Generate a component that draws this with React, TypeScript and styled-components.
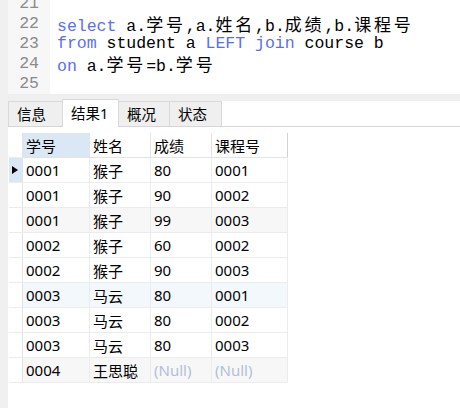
import React from 'react';
import styled, { createGlobalStyle } from 'styled-components';

const GlobalStyle = createGlobalStyle`
  html, body {
    margin: 0;
    padding: 0;
    background: #ffffff;
  }
`;

const CJK_RE = /([\u3400-\u9fff]+)/;

type Token = { text: string; kw?: boolean };

const codeLines: { no: number; tokens: Token[] }[] = [
  { no: 21, tokens: [] },
  { no: 22, tokens: [{ text: 'select', kw: true }, { text: ' a.学号,a.姓名,b.成绩,b.课程号' }] },
  {
    no: 23,
    tokens: [
      { text: 'from', kw: true },
      { text: ' student a ' },
      { text: 'LEFT', kw: true },
      { text: ' ' },
      { text: 'join', kw: true },
      { text: ' course b' },
    ],
  },
  { no: 24, tokens: [{ text: 'on', kw: true }, { text: ' a.学号=b.学号' }] },
  { no: 25, tokens: [] },
];

const tabs = [
  { label: '信息', width: 55 },
  { label: '结果1', width: 57, active: true },
  { label: '概况', width: 52 },
  { label: '状态', width: 53 },
];

const columns = [
  { title: '学号', width: 67, selected: true },
  { title: '姓名', width: 61 },
  { title: '成绩', width: 61 },
  { title: '课程号', width: 76 },
];

type Row = { cells: (string | null)[]; tone?: 'gray' | 'blue'; current?: boolean };

const rows: Row[] = [
  { cells: ['0001', '猴子', '80', '0001'], current: true },
  { cells: ['0001', '猴子', '90', '0002'] },
  { cells: ['0001', '猴子', '99', '0003'], tone: 'gray' },
  { cells: ['0002', '猴子', '60', '0002'] },
  { cells: ['0002', '猴子', '90', '0003'] },
  { cells: ['0003', '马云', '80', '0001'], tone: 'blue' },
  { cells: ['0003', '马云', '80', '0002'] },
  { cells: ['0003', '马云', '80', '0003'] },
  { cells: ['0004', '王思聪', null, null], tone: 'gray' },
];

const UI_FONT = `'Noto Sans', 'Noto Sans CJK SC', sans-serif`;

const Page = styled.div`
  width: 460px;
  height: 408px;
  overflow: hidden;
  box-sizing: border-box;
  border-left: 8px solid #f0f0f0;
  display: flex;
  flex-direction: column;
  background: #ffffff;
`;

const Editor = styled.div`
  height: 94px;
  flex: none;
  display: flex;
  overflow: hidden;
`;

const Gutter = styled.div`
  width: 42px;
  flex: none;
  background: #f7f7f7;
  padding-right: 11px;
  box-sizing: border-box;
  text-align: right;
`;

const CodePane = styled.div`
  flex: 1;
  padding-left: 7px;
`;

const Lines = styled.div`
  margin-top: -6px;
`;

const LineNo = styled.div`
  height: 20px;
  line-height: 20px;
  font-family: 'Liberation Mono', 'Courier New', monospace;
  font-size: 16.5px;
  color: #8a8a8a;
`;

const CodeLine = styled.div`
  height: 20px;
  line-height: 20px;
  white-space: pre;
  font-family: 'Liberation Mono', 'Courier New', monospace;
  font-size: 16.5px;
  color: #000000;
`;

const Keyword = styled.span`
  color: #5a6ef3;
`;

const Wide = styled.span`
  font-family: 'Noto Sans CJK SC', sans-serif;
  font-size: 17px;
  letter-spacing: 2.8px;
`;

const TabStrip = styled.div`
  height: 33px;
  flex: none;
  display: flex;
  align-items: flex-end;
  background: linear-gradient(#efefef 0 7px, #ffffff 7px);
  border-bottom: 1px solid #d6d6d6;
  box-sizing: border-box;
`;

const Tab = styled.div<{ $w: number; $active?: boolean }>`
  width: ${(p) => p.$w}px;
  height: ${(p) => (p.$active ? 28 : 25)}px;
  margin-bottom: ${(p) => (p.$active ? -1 : 0)}px;
  margin-left: -1px;
  box-sizing: border-box;
  border: 1px solid #d9d9d9;
  border-bottom: none;
  background: ${(p) => (p.$active ? '#ffffff' : '#efefef')};
  position: relative;
  z-index: ${(p) => (p.$active ? 1 : 0)};
  padding-left: 8px;
  font-family: ${UI_FONT};
  font-size: 14.5px;
  line-height: ${(p) => (p.$active ? 27 : 25)}px;
  color: #000000;
  &:first-child {
    margin-left: 0;
  }
`;

const GridWrap = styled.div`
  padding: 6px 0 0 1px;
`;

const Grid = styled.table`
  border-collapse: collapse;
  table-layout: fixed;
  font-family: ${UI_FONT};
  font-size: 15px;
  color: #000000;
`;

const HeadCell = styled.th<{ $w: number; $selected?: boolean }>`
  width: ${(p) => p.$w}px;
  height: 24px;
  padding: 0 0 0 3px;
  box-sizing: border-box;
  text-align: left;
  font-weight: normal;
  background: ${(p) => (p.$selected ? '#dae8f6' : '#ffffff')};
  border-right: 1px solid #e3e3e3;
  border-bottom: 1px solid #e3e3e3;
  &:last-child {
    border-right-color: #d2d2d2;
  }
`;

const Indicator = styled.td<{ $current?: boolean }>`
  width: 13px;
  height: 24px;
  padding: 0;
  background: ${(p) => (p.$current ? '#dae8f6' : '#ffffff')};
  border-right: 1px solid #e3e3e3;
  border-bottom: 1px solid #ececec;
  position: relative;
`;

const Arrow = styled.span`
  position: absolute;
  left: 3px;
  top: 8px;
  width: 0;
  height: 0;
  border-left: 6px solid #000000;
  border-top: 4px solid transparent;
  border-bottom: 4px solid transparent;
`;

const DataRow = styled.tr<{ $tone?: 'gray' | 'blue' }>`
  background: ${(p) =>
    p.$tone === 'gray' ? '#f7f7f7' : p.$tone === 'blue' ? '#f3f8fd' : '#ffffff'};
`;

const Cell = styled.td<{ $null?: boolean }>`
  height: 24px;
  padding: 0 0 0 3px;
  box-sizing: border-box;
  white-space: nowrap;
  color: ${(p) => (p.$null ? '#b3bfd8' : '#000000')};
  border-right: 1px solid #ececec;
  border-bottom: 1px solid #ececec;
`;

function renderText(text: string) {
  return text.split(CJK_RE).map((part, i) =>
    CJK_RE.test(part) ? <Wide key={i}>{part}</Wide> : <React.Fragment key={i}>{part}</React.Fragment>
  );
}

export default function App() {
  return (
    <>
      <GlobalStyle />
      <Page>
        <Editor>
          <Gutter>
            <Lines>
              {codeLines.map((l) => (
                <LineNo key={l.no}>{l.no}</LineNo>
              ))}
            </Lines>
          </Gutter>
          <CodePane>
            <Lines>
              {codeLines.map((l) => (
                <CodeLine key={l.no}>
                  {l.tokens.map((t, i) =>
                    t.kw ? <Keyword key={i}>{t.text}</Keyword> : <React.Fragment key={i}>{renderText(t.text)}</React.Fragment>
                  )}
                </CodeLine>
              ))}
            </Lines>
          </CodePane>
        </Editor>

        <TabStrip>
          {tabs.map((t) => (
            <Tab key={t.label} $w={t.width} $active={t.active}>
              {t.label}
            </Tab>
          ))}
        </TabStrip>

        <GridWrap>
          <Grid>
            <thead>
              <tr>
                <Indicator as="th" />
                {columns.map((c) => (
                  <HeadCell key={c.title} $w={c.width} $selected={c.selected}>
                    {c.title}
                  </HeadCell>
                ))}
              </tr>
            </thead>
            <tbody>
              {rows.map((r, i) => (
                <DataRow key={i} $tone={r.tone}>
                  <Indicator $current={r.current}>{r.current && <Arrow />}</Indicator>
                  {r.cells.map((c, j) => (
                    <Cell key={j} $null={c === null}>
                      {c ?? '(Null)'}
                    </Cell>
                  ))}
                </DataRow>
              ))}
            </tbody>
          </Grid>
        </GridWrap>
      </Page>
    </>
  );
}
